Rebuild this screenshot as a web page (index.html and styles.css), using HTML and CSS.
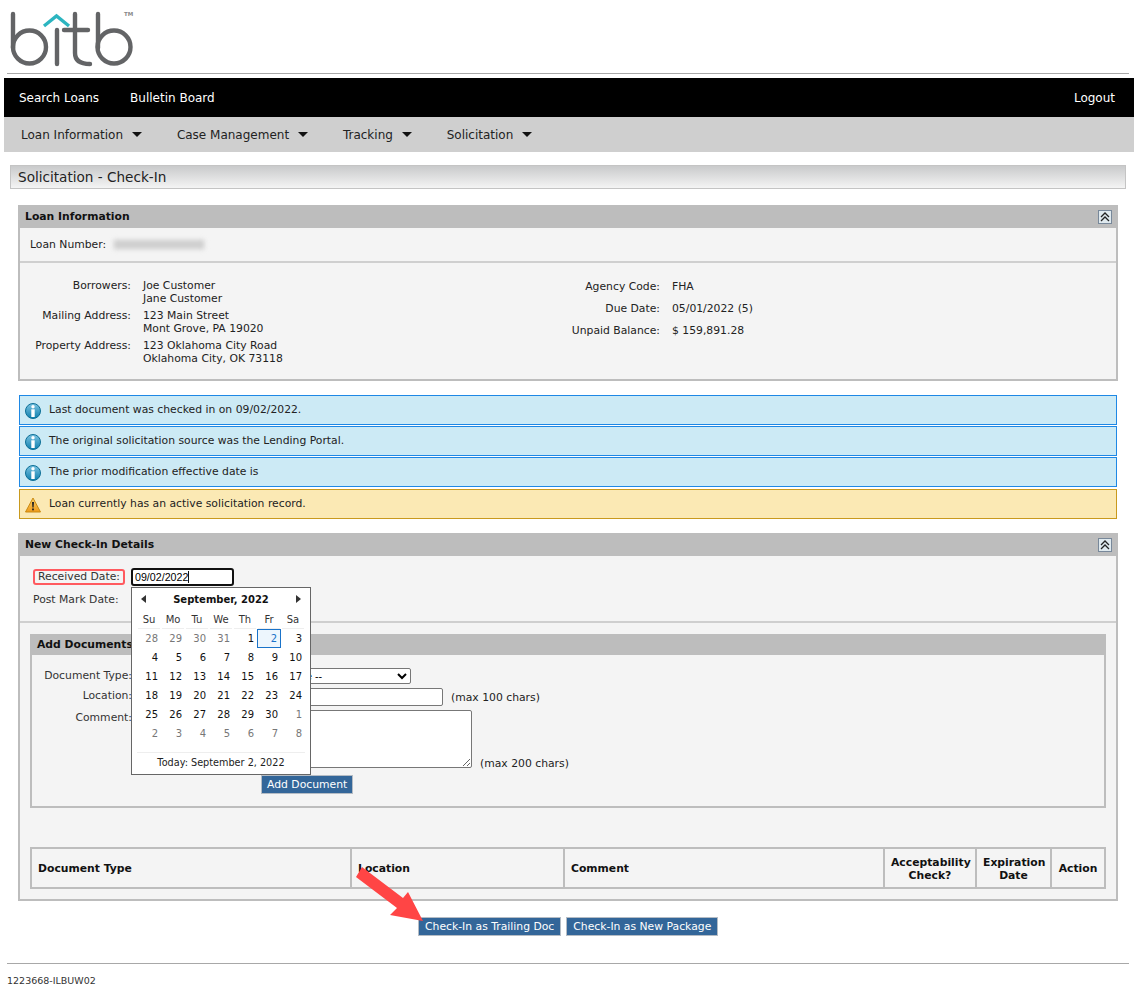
FILE: index.html
```html
<!DOCTYPE html>
<html lang="en">
<head>
  <meta charset="UTF-8">
  <meta name="viewport" content="width=device-width, initial-scale=1.0">
  <title>Solicitation - Check-In</title>
  <link rel="stylesheet" href="styles.css">
</head>
<body>
  <!-- Logo -->
  <div class="logo-row">
    <svg class="logo" width="124" height="55" viewBox="0 0 124 55" fill="none">
      <g stroke="#636466" stroke-width="4.4" stroke-linecap="round">
        <path d="M3 2V36"/>
        <circle cx="19.5" cy="35" r="16.5"/>
        <path d="M47 18V52"/>
        <path d="M65 2V41C65 48 70 52 80 52"/>
        <path d="M54 18H78"/>
        <path d="M88 2V36"/>
        <circle cx="104" cy="35" r="16.5"/>
      </g>
      <path d="M34 14L46.5 4L59 14" stroke="#2cb5c0" stroke-width="3.4" fill="none"/>
      <text class="logo-tm" x="114" y="4">TM</text>
    </svg>
  </div>
  <div class="logo-rule"></div>

  <!-- Navbar -->
  <nav class="top-nav">
    <div class="top-links">
      <a href="#">Search Loans</a>
      <a href="#">Bulletin Board</a>
    </div>
    <a href="#">Logout</a>
  </nav>
  <nav class="sub-nav">
    <a href="#">Loan Information <span class="caret"></span></a>
    <a href="#">Case Management <span class="caret"></span></a>
    <a href="#">Tracking <span class="caret"></span></a>
    <a href="#">Solicitation <span class="caret"></span></a>
  </nav>

  <div class="page-title">Solicitation - Check-In</div>

  <!-- Main Content -->
  <main>
    <section class="panel">
      <div class="panel-head">
        <span>Loan Information</span>
        <span class="collapse">
          <svg width="12" height="12" viewBox="0 0 12 12" fill="none" stroke="#222" stroke-width="1.3"><path d="M2 6L6 2L10 6M2 10L6 6L10 10"/></svg>
        </span>
      </div>
      <div class="loan-number">
        <span>Loan Number:</span>
        <span class="blurred"></span>
      </div>
      <div class="loan-details">
        <dl class="fields fields-left">
          <dt>Borrowers:</dt>
          <dd>Joe Customer<br>Jane Customer</dd>
          <dt>Mailing Address:</dt>
          <dd>123 Main Street<br>Mont Grove, PA 19020</dd>
          <dt>Property Address:</dt>
          <dd>123 Oklahoma City Road<br>Oklahoma City, OK 73118</dd>
        </dl>
        <dl class="fields fields-right">
          <dt>Agency Code:</dt>
          <dd>FHA</dd>
          <dt>Due Date:</dt>
          <dd>05/01/2022 (5)</dd>
          <dt>Unpaid Balance:</dt>
          <dd>$ 159,891.28</dd>
        </dl>
      </div>
    </section>

    <div class="messages">
      <svg class="icon-defs" width="0" height="0">
        <defs>
          <linearGradient id="infoFill" x1="0" y1="0" x2="0" y2="1">
            <stop offset="0" stop-color="#7cc4e2"/>
            <stop offset="1" stop-color="#0f7fae"/>
          </linearGradient>
          <linearGradient id="warnFill" x1="0" y1="0" x2="0" y2="1">
            <stop offset="0" stop-color="#fbd36b"/>
            <stop offset="1" stop-color="#ef9a1a"/>
          </linearGradient>
        </defs>
      </svg>
      <div class="msg msg-info">
        <svg class="msg-icon" width="16" height="16" viewBox="0 0 16 16"><circle cx="8" cy="8" r="7.5" fill="url(#infoFill)" stroke="#0d6f96"/><circle cx="8" cy="3.8" r="1.7" fill="#fff"/><rect x="6.3" y="6.3" width="3.4" height="7.7" fill="#fff"/></svg>
        Last document was checked in on 09/02/2022.
      </div>
      <div class="msg msg-info">
        <svg class="msg-icon" width="16" height="16" viewBox="0 0 16 16"><circle cx="8" cy="8" r="7.5" fill="url(#infoFill)" stroke="#0d6f96"/><circle cx="8" cy="3.8" r="1.7" fill="#fff"/><rect x="6.3" y="6.3" width="3.4" height="7.7" fill="#fff"/></svg>
        The original solicitation source was the Lending Portal.
      </div>
      <div class="msg msg-info">
        <svg class="msg-icon" width="16" height="16" viewBox="0 0 16 16"><circle cx="8" cy="8" r="7.5" fill="url(#infoFill)" stroke="#0d6f96"/><circle cx="8" cy="3.8" r="1.7" fill="#fff"/><rect x="6.3" y="6.3" width="3.4" height="7.7" fill="#fff"/></svg>
        The prior modification effective date is
      </div>
      <div class="msg msg-warn">
        <svg class="msg-icon" width="16" height="16" viewBox="0 0 16 16"><path d="M8 1L15.5 15H0.5Z" fill="url(#warnFill)" stroke="#c98a12" stroke-linejoin="round"/><path d="M7 5H9L8.6 10.5H7.4Z" fill="#222"/><rect x="7.1" y="11.5" width="1.8" height="1.8" fill="#222"/></svg>
        Loan currently has an active solicitation record.
      </div>
    </div>

    <section class="panel panel-checkin">
      <div class="panel-head">
        <span>New Check-In Details</span>
        <span class="collapse">
          <svg width="12" height="12" viewBox="0 0 12 12" fill="none" stroke="#222" stroke-width="1.3"><path d="M2 6L6 2L10 6M2 10L6 6L10 10"/></svg>
        </span>
      </div>
      <div class="date-rows">
        <div class="date-row">
          <label class="date-label date-label-marked">Received Date:</label>
          <div class="date-wrap">
            <input class="date-input" type="text" value="09/02/2022">
            <span class="date-cursor"></span>
          </div>
        </div>
        <div class="date-row">
          <label class="date-label">Post Mark Date:</label>
        </div>
      </div>

      <div class="docs-wrap">
        <div class="docs-box">
          <div class="docs-head">Add Documents</div>
          <div class="docs-form">
            <label>Document Type:</label>
            <div class="docs-field"><select class="doc-select"><option>-- Select a Document Type --</option></select></div>
            <label>Location:</label>
            <div class="docs-field"><input class="doc-text" type="text"><span>(max 100 chars)</span></div>
            <label>Comment:</label>
            <div class="docs-field docs-field-end"><textarea class="doc-area"></textarea><span class="note-end">(max 200 chars)</span></div>
            <div class="docs-action"><button class="btn btn-add">Add Document</button></div>
          </div>
        </div>

        <table class="docs-table">
          <thead>
            <tr>
              <th class="col-type">Document Type</th>
              <th class="col-location">Location</th>
              <th class="col-comment">Comment</th>
              <th class="col-check">Acceptability Check?</th>
              <th class="col-exp">Expiration Date</th>
              <th class="col-action">Action</th>
            </tr>
          </thead>
        </table>
      </div>

      <!-- Date picker popup -->
      <div class="calendar">
        <div class="cal-head">
          <span class="cal-prev"></span>
          <strong>September, 2022</strong>
          <span class="cal-next"></span>
        </div>
        <div class="cal-grid" id="calGrid"></div>
        <div class="cal-today">Today: September 2, 2022</div>
      </div>
    </section>

    <div class="actions">
      <button class="btn">Check-In as Trailing Doc</button>
      <button class="btn">Check-In as New Package</button>
    </div>

    <!-- Annotation arrow -->
    <svg class="arrow" width="70" height="58" viewBox="0 0 70 58"><path d="M7 1L48 32L53 26L68 55L35 49L42 42L1 11Z" fill="#ff4545"/></svg>
  </main>

  <footer>
    <div class="foot-rule"></div>
    <div class="foot-text">1223668-ILBUW02</div>
  </footer>

  <script>
    // Build the calendar cells
    const days = ["Su", "Mo", "Tu", "We", "Th", "Fr", "Sa"];
    const cells = [[28, 1], [29, 1], [30, 1], [31, 1]];
    for (let d = 1; d <= 30; d++) cells.push([d, 0]);
    for (let d = 1; d <= 8; d++) cells.push([d, 1]);

    const grid = document.getElementById("calGrid");
    days.forEach(day => {
      const el = document.createElement("div");
      el.className = "cal-day";
      el.textContent = day;
      grid.appendChild(el);
    });
    cells.forEach(cell => {
      const el = document.createElement("div");
      el.className = "cal-cell";
      if (cell[1]) el.classList.add("cal-muted");
      if (cell[0] === 2 && !cell[1]) el.classList.add("cal-selected");
      el.textContent = cell[0];
      grid.appendChild(el);
    });
  </script>
</body>
</html>
```

FILE: styles.css
```css
body {
  font-family: "DejaVu Sans", Verdana, sans-serif;
  font-size: 10.8px;
  margin: 0;
  padding: 0;
  background-color: white;
  color: #222;
}
.logo-row {
  height: 73px;
  padding: 12px 0 0 10px;
  box-sizing: border-box;
}
.logo {
  display: block;
  overflow: visible;
}
.logo-tm {
  font-size: 5.5px;
  font-weight: bold;
  fill: #888;
}
.logo-rule {
  height: 1px;
  margin: 0 9px 0 7px;
  background-color: #a8a8a8;
}
.top-nav {
  display: flex;
  justify-content: space-between;
  align-items: center;
  height: 39px;
  margin: 4px 4px 0 4px;
  padding: 0 19px 0 15px;
  background-color: black;
}
.top-nav a {
  color: white;
  text-decoration: none;
  font-size: 12px;
}
.top-links {
  display: flex;
  gap: 31px;
}
.sub-nav {
  display: flex;
  align-items: center;
  gap: 35px;
  height: 35px;
  margin: 0 4px;
  padding: 0 0 0 17px;
  background-color: #cfcfcf;
}
.sub-nav a {
  color: #222;
  text-decoration: none;
  font-size: 12px;
}
.caret {
  display: inline-block;
  width: 0;
  height: 0;
  margin-left: 5px;
  vertical-align: 2px;
  border-left: 5px solid transparent;
  border-right: 5px solid transparent;
  border-top: 5px solid #111;
}
.page-title {
  height: 22px;
  margin: 13px 12px 0 10px;
  padding-left: 7px;
  border: 1px solid #c4c4c4;
  background: linear-gradient(#c9cacb, #f4f4f4);
  font-size: 13.6px;
  line-height: 22px;
  color: #222;
}
main {
  position: relative;
  padding: 16px 20px 0 18px;
}
.panel {
  border: 2px solid #bdbdbd;
  border-top: none;
  background-color: #f4f4f4;
}
.panel-head {
  display: flex;
  justify-content: space-between;
  align-items: center;
  height: 23px;
  margin: 0 -2px;
  padding: 0 6px 0 7px;
  background-color: #bdbdbd;
  font-weight: bold;
  color: #111;
}
.collapse {
  display: flex;
  align-items: center;
  justify-content: center;
  width: 12px;
  height: 12px;
  border: 1px solid #78889a;
  background-color: #dfe9ee;
}
.loan-number {
  display: flex;
  align-items: center;
  gap: 8px;
  height: 33px;
  padding-left: 10px;
  border-bottom: 2px solid #cfcfcf;
}
.blurred {
  width: 90px;
  height: 9px;
  background-color: #cfcfcf;
  box-shadow: 0 0 3px #dcdcdc;
  filter: blur(2px);
}
.loan-details {
  display: flex;
  height: 116px;
}
.fields {
  display: grid;
  margin: 0;
  column-gap: 12px;
  align-content: start;
}
.fields dt {
  text-align: right;
}
.fields dd {
  margin: 0;
}
.fields-left {
  grid-template-columns: 111px auto;
  grid-auto-rows: 30px;
  width: 522px;
  padding-top: 16px;
  line-height: 13px;
}
.fields-right {
  grid-template-columns: 118px auto;
  grid-auto-rows: 22px;
  padding-top: 17px;
  line-height: 13px;
}
.icon-defs {
  position: absolute;
}
.messages {
  display: flex;
  flex-direction: column;
  gap: 1px;
  margin: 14px 1px;
}
.msg {
  display: flex;
  align-items: center;
  gap: 8px;
  height: 27px;
  padding: 0 0 1px 5px;
  border: 1px solid;
}
.msg-info {
  background-color: #cceaf5;
  border-color: #1e88e5;
}
.msg-warn {
  background-color: #fbe9b4;
  border-color: #c99a1e;
  margin-top: 1px;
}
.msg-icon {
  flex: none;
  margin-top: 2px;
}
.panel-checkin {
  position: relative;
  height: 366px;
}
.date-rows {
  height: 67px;
  padding: 10px 0 0 15px;
  box-sizing: border-box;
  border-bottom: 2px solid #cfcfcf;
}
.date-row {
  display: flex;
  align-items: center;
  gap: 6px;
  height: 22px;
}
.date-label {
  margin-left: -2px;
  color: #333;
}
.date-label-marked {
  padding: 0 3px;
  height: 12px;
  line-height: 12px;
  border: 2px solid #ff5a5f;
  border-radius: 3px;
}
.date-wrap {
  position: relative;
}
.date-input {
  display: block;
  box-sizing: border-box;
  width: 103px;
  height: 18px;
  padding: 1px 2px;
  font-family: "Liberation Sans", Arial, sans-serif;
  font-size: 10.67px;
  border: 2px solid #111;
  border-radius: 3px;
  background-color: white;
}
.date-cursor {
  position: absolute;
  left: 57px;
  top: 3px;
  width: 1px;
  height: 12px;
  background-color: #111;
}
.docs-wrap {
  padding: 11px 10px 0 10px;
}
.docs-box {
  height: 172px;
  border: 2px solid #bdbdbd;
  border-top: none;
}
.docs-head {
  height: 21px;
  margin: 0 -2px;
  padding-left: 7px;
  background-color: #bdbdbd;
  font-weight: bold;
  line-height: 21px;
  color: #111;
}
.docs-form {
  display: grid;
  grid-template-columns: 100px auto;
  column-gap: 4px;
  row-gap: 4px;
  padding-top: 13px;
}
.docs-form label {
  padding-top: 1px;
  text-align: right;
  line-height: 13px;
  color: #333;
}
.docs-field {
  display: flex;
  align-items: center;
  gap: 8px;
}
.docs-field-end {
  align-items: flex-end;
}
.note-end {
  margin-bottom: -2px;
}
.doc-select {
  box-sizing: border-box;
  width: 275px;
  height: 16px;
  padding-left: 45px;
  font-family: "Liberation Sans", Arial, sans-serif;
  font-size: 10.67px;
  border: 1px solid #777;
  border-radius: 2px;
  background-color: white;
}
.doc-text {
  box-sizing: border-box;
  width: 307px;
  height: 18px;
  border: 1px solid #777;
  border-radius: 2px;
}
.doc-area {
  display: block;
  box-sizing: border-box;
  width: 336px;
  height: 58px;
  border: 1px solid #777;
  border-radius: 2px;
  resize: both;
}
.docs-action {
  grid-column: 2;
  margin: 3px 0 0 125px;
}
.btn {
  height: 19px;
  padding: 0 6px;
  font-family: "DejaVu Sans", Verdana, sans-serif;
  font-size: 10.8px;
  color: white;
  background-color: #336699;
  border: 1px solid #b5bcc4;
}
.btn-add {
  padding: 0 5px;
}
.docs-table {
  width: 100%;
  margin-top: 39px;
  border-collapse: collapse;
  table-layout: fixed;
}
.docs-table th {
  box-sizing: border-box;
  height: 40px;
  padding: 1px 6px 0 6px;
  font-size: 10.8px;
  line-height: 13px;
  color: #111;
  border: 2px solid #bdbdbd;
}
.col-type, .col-location, .col-comment {
  text-align: left;
}
.col-type { width: 320px; }
.col-location { width: 213px; }
.col-comment { width: 320px; }
.col-check { width: 92px; }
.col-exp { width: 75px; }
.calendar {
  position: absolute;
  left: 111px;
  top: 54px;
  width: 178px;
  height: 186px;
  background-color: white;
  border: 1px solid #666;
}
.cal-head {
  display: flex;
  justify-content: space-between;
  align-items: center;
  height: 22px;
  padding: 0 9px;
  font-size: 10px;
  color: #111;
}
.cal-prev, .cal-next {
  width: 0;
  height: 0;
  border-top: 4px solid transparent;
  border-bottom: 4px solid transparent;
}
.cal-prev { border-right: 5px solid #333; }
.cal-next { border-left: 5px solid #333; }
.cal-grid {
  display: grid;
  grid-template-columns: repeat(7, 24px);
  grid-auto-rows: 19px;
  padding: 0 5px;
}
.cal-day {
  text-align: center;
  font-size: 10px;
  line-height: 19px;
  color: #333;
  border-bottom: 1px solid #eee;
  margin: 0 1px;
}
.cal-cell {
  text-align: right;
  padding-right: 3px;
  font-size: 10px;
  line-height: 19px;
  color: #111;
}
.cal-muted {
  color: #777;
}
.cal-selected {
  box-sizing: border-box;
  line-height: 17px;
  color: #1a73c9;
  background-color: #edf6fd;
  border: 1px solid #1a73c9;
}
.cal-today {
  margin: 9px 5px 0 5px;
  padding-top: 3px;
  border-top: 1px solid #eee;
  text-align: center;
  font-size: 9.7px;
  line-height: 14px;
}
.actions {
  display: flex;
  justify-content: flex-start;
  gap: 5px;
  margin: 16px 0 0 400px;
}
.arrow {
  position: absolute;
  left: 355px;
  top: 677px;
}
.foot-rule {
  height: 1px;
  margin: 27px 9px 0 7px;
  background-color: #a8a8a8;
}
.foot-text {
  margin: 11px 0 0 7px;
  font-size: 9.5px;
  color: #333;
}
```
